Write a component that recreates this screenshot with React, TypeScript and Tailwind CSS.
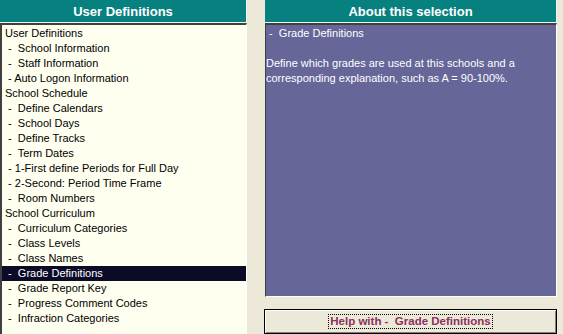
const items: { label: string; selected?: boolean }[] = [
  { label: 'User Definitions' },
  { label: ' -  School Information' },
  { label: ' -  Staff Information' },
  { label: ' - Auto Logon Information' },
  { label: 'School Schedule' },
  { label: ' -  Define Calendars' },
  { label: ' -  School Days' },
  { label: ' -  Define Tracks' },
  { label: ' -  Term Dates' },
  { label: ' - 1-First define Periods for Full Day' },
  { label: ' - 2-Second: Period Time Frame' },
  { label: ' -  Room Numbers' },
  { label: 'School Curriculum' },
  { label: ' -  Curriculum Categories' },
  { label: ' -  Class Levels' },
  { label: ' -  Class Names' },
  { label: ' -  Grade Definitions', selected: true },
  { label: ' -  Grade Report Key' },
  { label: ' -  Progress Comment Codes' },
  { label: ' -  Infraction Categories' },
]

function PanelHeader({ title }: { title: string }) {
  return (
    <div className="h-[23px] shrink-0 bg-[#078080] border-r border-b border-r-[#f4f4ee] border-b-[#f4f4ee] flex items-center justify-center">
      <span className="text-[13px] font-bold text-white leading-none">{title}</span>
    </div>
  )
}

export default function App() {
  return (
    <div
      className="w-[563px] h-[334px] overflow-hidden bg-[#ece9d8] flex gap-[18px]"
      style={{ fontFamily: '"Liberation Sans", Arial, sans-serif' }}
    >
      {/* Left: menu list */}
      <div className="w-[247px] flex flex-col">
        <PanelHeader title="User Definitions" />
        <div className="flex-1 bg-[#fffff0] border-t-2 border-l-2 border-r border-t-[#404040] border-l-[#404040] border-r-white pt-px">
          {items.map((item) => (
            <div
              key={item.label}
              className={`h-[15px] leading-[15px] text-[11px] pl-[3px] whitespace-pre ${
                item.selected ? 'bg-[#0b0b28] text-white' : 'text-black'
              }`}
            >
              {item.label}
            </div>
          ))}
        </div>
      </div>

      {/* Right: description + help button */}
      <div className="w-[292px] flex flex-col">
        <PanelHeader title="About this selection" />
        <div className="h-[274px] bg-[#666699] border-t-2 border-l border-r border-b border-t-[#404040] border-l-[#404040] border-r-white border-b-white pt-px text-[11px] leading-[15px] text-white">
          <div className="whitespace-pre"> -  Grade Definitions</div>
          <div className="h-[15px]" />
          <div>Define which grades are used at this schools and a corresponding explanation, such as A = 90-100%.</div>
        </div>
        <div className="mt-[12px] -ml-px h-[25px] border border-black bg-[#ece9d8] shadow-[inset_1px_1px_0_#ffffff,inset_-1px_-1px_0_#808080] flex items-center justify-center">
          <span className="px-[1px] border border-dotted border-black whitespace-pre text-[11.5px] leading-[13px] font-bold text-[#8c2f62]">
            Help with -  Grade Definitions
          </span>
        </div>
      </div>
    </div>
  )
}
